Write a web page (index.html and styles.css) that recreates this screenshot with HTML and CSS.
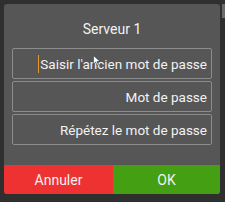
FILE: index.html
```html
<!DOCTYPE html>
<html lang="fr">
<head>
  <meta charset="UTF-8">
  <meta name="viewport" content="width=device-width, initial-scale=1.0">
  <title>Serveur 1</title>
  <link rel="stylesheet" href="styles.css">
</head>
<body>
  <div class="screen">
    <div class="dialog">
      <div class="title">Serveur 1</div>

      <div class="fields">
        <div class="field"><span class="caret">Saisir l'ancien mot de passe</span></div>
        <div class="field">Mot de passe</div>
        <div class="field">Répétez le mot de passe</div>
      </div>

      <div class="buttons">
        <div class="btn cancel">Annuler</div>
        <div class="btn ok">OK</div>
      </div>
    </div>

    <!-- curseur souris -->
    <svg class="pointer" width="8" height="11" viewBox="0 0 8 11">
      <path d="M0.5 0.5 L0.5 9 L2.6 7 L4 10.3 L5.4 9.7 L4 6.5 L7 6.5 Z" fill="#fff" stroke="#333" stroke-width="0.6"/>
    </svg>
    <div class="edge"></div>
  </div>
</body>
</html>
```

FILE: styles.css
```css
html,
body {
  margin: 0;
  width: 100%;
  height: 100%;
}
body {
  background: #2f2f2f;
  font-family: Roboto, "Noto Sans", sans-serif;
  color: #f2f2f2;
}

.screen {
  position: relative;
  padding: 4px 5px 0 4px;
  height: 202px;
  box-sizing: border-box;
}

.dialog {
  width: 216px;
  height: 190px;
  background: #565656;
  border-radius: 3px;
  overflow: hidden;
  display: flex;
  flex-direction: column;
}

.title {
  height: 44px;
  line-height: 50px;
  text-align: center;
  font-size: 14px;
}

.fields {
  display: flex;
  flex-direction: column;
  gap: 2px;
  padding: 0 8px;
}
.field {
  height: 31px;
  border: 1px solid #8c8c8c;
  border-radius: 2px;
  box-sizing: border-box;
  display: flex;
  align-items: center;
  justify-content: flex-end;
  padding-right: 4px;
  font-size: 13.5px;
  white-space: nowrap;
  overflow: hidden;
}
.caret {
  border-left: 1px solid #e39a2a;
  padding-left: 1px;
  line-height: 18px;
}

.buttons {
  margin-top: auto;
  display: flex;
  height: 29px;
}
.btn {
  display: flex;
  align-items: center;
  justify-content: center;
  font-size: 14px;
}
.cancel {
  width: 109px;
  background: #ee3131;
}
.ok {
  flex: 1;
  background: #449f12;
}

.pointer {
  position: absolute;
  top: 55px; left: 93px;
}
.edge {
  position: absolute;
  top: 4px; right: 0;
  width: 3px; height: 14px;
  background: #6a6a6a;
}
```
